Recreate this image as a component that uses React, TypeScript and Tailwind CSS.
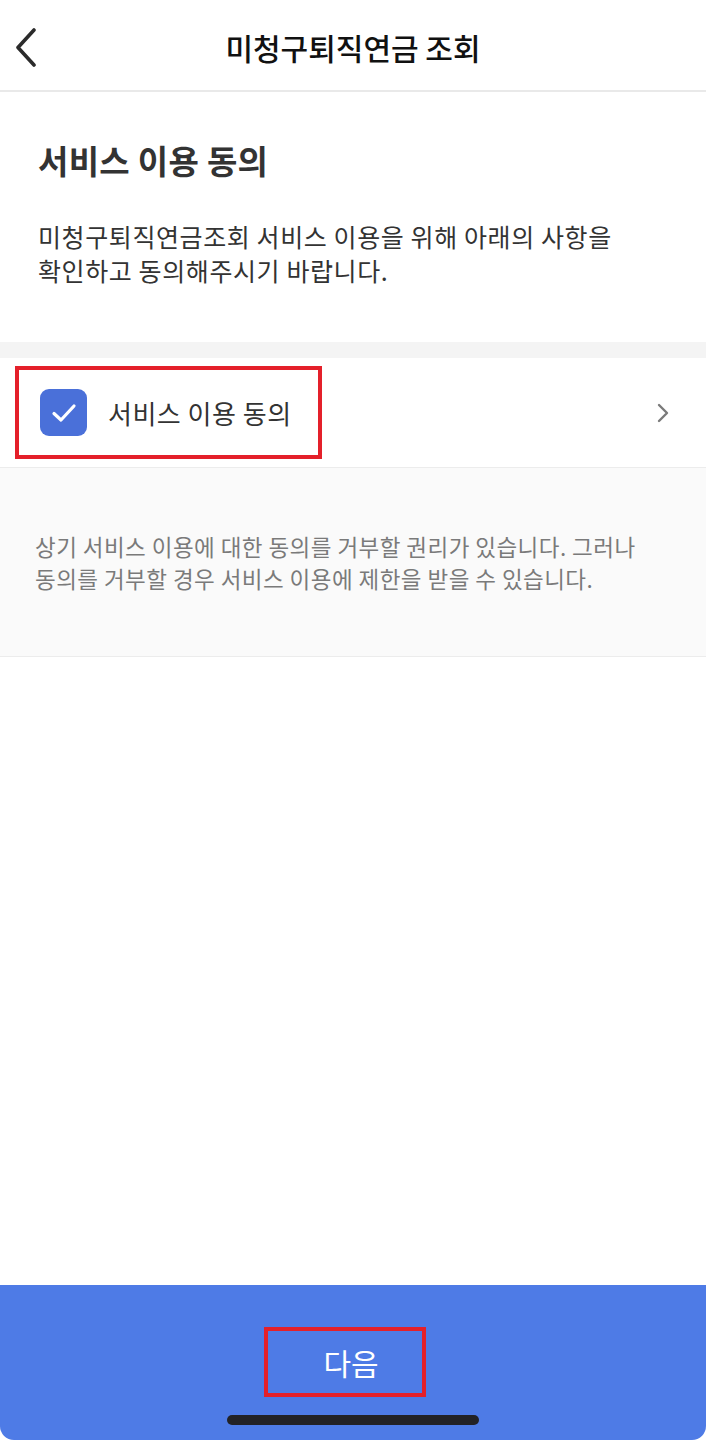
const font = { fontFamily: '"Noto Sans CJK KR", "Noto Sans", sans-serif' };

function BackIcon() {
  return (
    <svg width="26" height="40" viewBox="0 0 26 40" fill="none">
      <path d="M22 3 L6 20.5 L22 38" stroke="#2b2b2b" strokeWidth="3.6" strokeLinecap="round" strokeLinejoin="round" />
    </svg>
  );
}

function ChevronRight() {
  return (
    <svg width="14" height="22" viewBox="0 0 14 22" fill="none">
      <path d="M3 3 L11 11 L3 19" stroke="#7a7a7a" strokeWidth="2.4" strokeLinecap="round" strokeLinejoin="round" />
    </svg>
  );
}

function CheckBox() {
  return (
    <div className="flex h-[47px] w-[47px] items-center justify-center rounded-[9px] bg-[#4a70d9]">
      <svg width="26" height="22" viewBox="0 0 26 22" fill="none">
        <path d="M3 11.5 L10 18 L23 4" stroke="#ffffff" strokeWidth="3.2" strokeLinecap="round" strokeLinejoin="round" />
      </svg>
    </div>
  );
}

export default function App() {
  return (
    <div className="flex h-[1440px] w-full flex-col bg-white" style={font}>
      {/* header */}
      <div className="grid h-[92px] grid-cols-[80px_1fr_80px] items-center border-b-2 border-[#e9e9e9]">
        <div className="pl-[12px] pt-[4px]">
          <BackIcon />
        </div>
        <div className="pt-[4px] text-center text-[30px] font-medium text-[#111]">
          미청구퇴직연금 조회
        </div>
        <div />
      </div>

      {/* intro */}
      <div className="px-[38px] pt-[48px] pb-[55px]">
        <h1 className="text-[33px] leading-[40px] font-bold tracking-[0.3px] text-[#333]">
          서비스 이용 동의
        </h1>
        <p className="mt-[39px] text-[25px] leading-[34px] tracking-[0.6px] text-[#333]">
          미청구퇴직연금조회 서비스 이용을 위해 아래의 사항을
          <br />
          확인하고 동의해주시기 바랍니다.
        </p>
      </div>

      <div className="h-[16px] bg-[#f4f4f4]" />

      {/* agreement row */}
      <div className="flex h-[110px] items-center justify-between border-b border-[#ececec] pl-[15px] pr-[36px]">
        <div className="flex h-[93px] items-center gap-[21px] border-[4px] border-[#e4202a] pl-[21px] pr-[26px]">
          <CheckBox />
          <span className="text-[26px] tracking-[0.5px] text-[#333]">서비스 이용 동의</span>
        </div>
        <ChevronRight />
      </div>

      {/* notice */}
      <div className="flex h-[189px] items-center border-b border-[#ececec] bg-[#fafafa] px-[35px]">
        <p className="text-[22.5px] leading-[32px] tracking-[0.45px] text-[#7a7a7a]">
          상기 서비스 이용에 대한 동의를 거부할 권리가 있습니다. 그러나
          <br />
          동의를 거부할 경우 서비스 이용에 제한을 받을 수 있습니다.
        </p>
      </div>

      <div className="flex-1" />

      {/* bottom button */}
      <div className="flex h-[155px] flex-col items-center rounded-b-[14px] bg-[#4e7be6]">
        <div className="mt-[42px] mr-[16px] flex h-[70px] w-[162px] items-center justify-center border-[4px] border-[#e4202a] pl-[12px]">
          <span className="text-[30px] text-white">다음</span>
        </div>
        <div className="mt-[18px] h-[10px] w-[252px] rounded-full bg-[#222226]" />
      </div>
    </div>
  );
}
